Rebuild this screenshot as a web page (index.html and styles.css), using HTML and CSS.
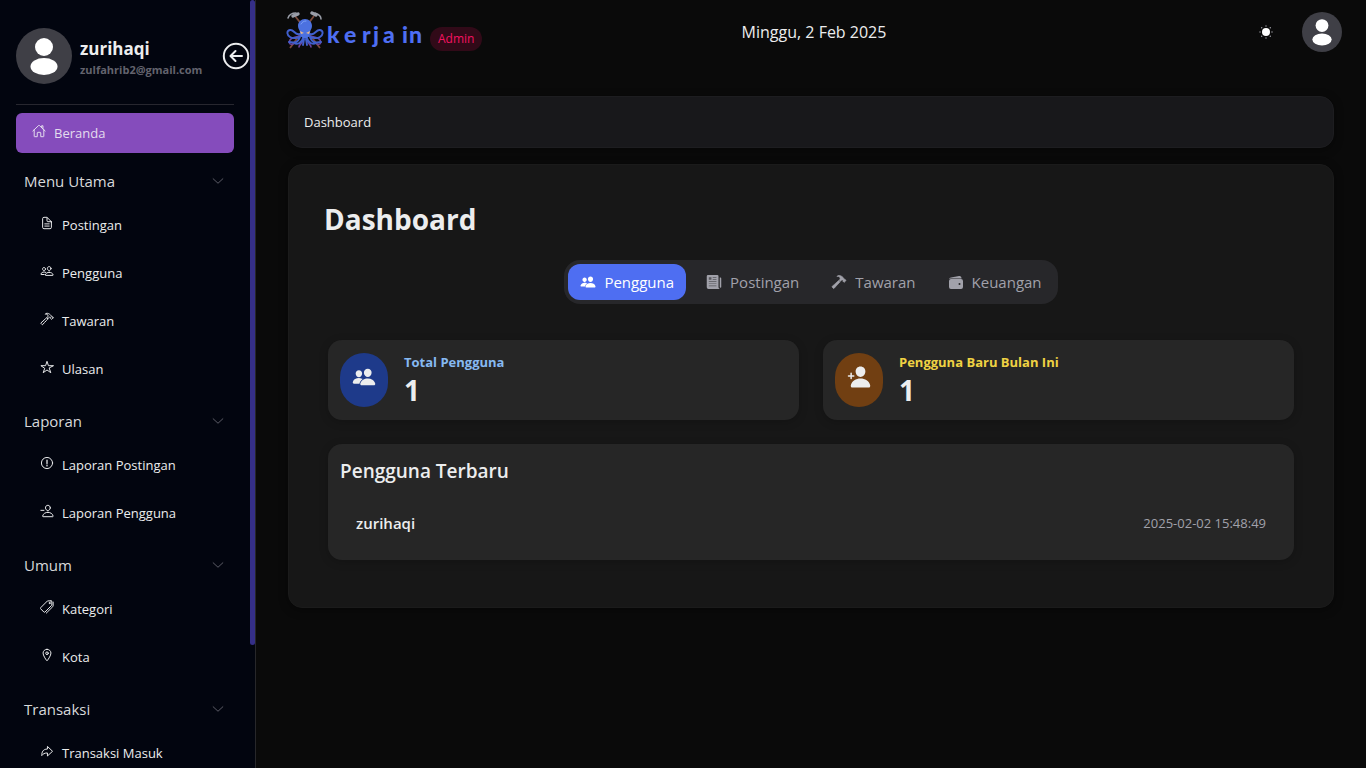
FILE: index.html
```html
<!DOCTYPE html>
<html lang="id">
<head>
<meta charset="utf-8">
<meta name="viewport" content="width=device-width, initial-scale=1">
<title>Dashboard - kerjain</title>
<link rel="stylesheet" href="styles.css">
</head>
<body>
<svg class="sprite" aria-hidden="true">
  <symbol id="avatar" viewBox="0 0 56 56"><circle cx="28" cy="28" r="28" fill="#3f3f46"/><circle cx="28" cy="19" r="9" fill="#fff"/><ellipse cx="28" cy="38.500" rx="13.500" ry="8.500" fill="#fff"/></symbol>
  <symbol id="home" viewBox="0 0 512 512"><path d="M80 212v236a16 16 0 0016 16h96V328a24 24 0 0124-24h80a24 24 0 0124 24v136h96a16 16 0 0016-16V212M480 256L266.890 52c-5-5.280-16.690-5.340-21.780 0L32 256M400 179V64h-48v69"/></symbol>
  <symbol id="document" viewBox="0 0 512 512"><path d="M416 221.250V416a48 48 0 01-48 48H144a48 48 0 01-48-48V96a48 48 0 0148-48h98.750a32 32 0 0122.620 9.370l141.260 141.260a32 32 0 019.370 22.620zM256 56v120a32 32 0 0032 32h120M176 288h160M176 368h160"/></symbol>
  <symbol id="people" viewBox="0 0 512 512"><path d="M402 168c-2.930 40.670-33.100 72-66 72s-63.120-31.320-66-72c-3-42.310 26.370-72 66-72s69 30.460 66 72zM336 304c-65.170 0-127.840 32.370-143.540 95.410-2.080 8.340 3.150 16.590 11.720 16.590h263.650c8.570 0 13.770-8.250 11.720-16.590C463.850 335.360 401.180 304 336 304zM200 185.940c-2.340 32.480-26.720 58.060-53 58.060s-50.700-25.570-53-58.060C91.610 152.150 115.340 128 147 128s55.390 24.770 53 57.940zM206 306c-18.050-8.270-37.930-11.450-59-11.450-52 0-102.100 25.850-114.650 76.200-1.650 6.660 2.530 13.250 9.370 13.250H154"/></symbol>
  <symbol id="people-fill" viewBox="0 0 512 512"><path d="M336 256c-20.560 0-40.440-9.180-56-25.840-15.130-16.250-24.370-37.920-26-61-1.740-24.620 5.770-47.260 21.140-63.760S312 80 336 80c23.830 0 45.380 9.060 60.700 25.520 15.470 16.620 23 39.220 21.260 63.630-1.670 23.110-10.900 44.770-26 61C376.440 246.820 356.570 256 336 256zM467.830 432H204.180a27.710 27.710 0 01-22-10.670 30.220 30.220 0 01-5.260-25.790c8.420-33.810 29.280-61.850 60.320-81.080C264.790 297.400 299.860 288 336 288c36.850 0 71 9 98.710 26.050 31.110 19.130 52 47.330 60.380 81.550a30.270 30.270 0 01-5.320 25.780A27.680 27.680 0 01467.830 432zM147 260c-35.190 0-66.130-32.720-69-72.930-1.420-20.600 5-39.650 18-53.620 12.860-13.830 31-21.450 51-21.450s38 7.660 50.930 21.570c13.100 14.080 19.500 33.090 18 53.520-2.870 40.200-33.800 72.910-68.930 72.910zM212.660 291.450c-17.590-8.600-40.420-12.900-65.650-12.900-29.460 0-58.070 7.680-80.570 21.620-25.510 15.830-42.670 38.880-49.600 66.710a27.390 27.390 0 004.790 23.360A25.320 25.320 0 0041.720 400h111a8 8 0 007.870-6.570c8.480-34.060 28.350-62.840 58.120-85.700a8 8 0 00-.630-13.390z"/></symbol>
  <symbol id="hammer" viewBox="0 0 512 512"><path d="M277.420 247a24.680 24.680 0 00-4.080-5.470L255 223.440a21.630 21.630 0 00-6.560-4.570 20.930 20.930 0 00-23.280 4.270c-6.360 6.260-18 17.680-39 38.430C146 301.300 71.430 367.890 37.710 396.290a16 16 0 00-1.090 23.540l39 39.430a16.130 16.130 0 0023.670-.890c29.240-34.370 96.300-109 136-148.230 20.390-20.060 31.820-31.580 38.290-37.940a21.760 21.760 0 003.840-25.200zM478.430 201l-34.310-34a5.440 5.440 0 00-4-1.590 5.590 5.590 0 00-4 1.590 11.410 11.410 0 01-9.550 3.270c-4.480-.490-9.250-1.880-12.330-4.860-7-6.860 1.090-20.360-5.070-29a242.880 242.880 0 00-23.080-26.720c-7.060-7-34.810-33.470-81.550-52.530a123.790 123.790 0 00-47-9.240c-26.350 0-46.610 11.760-54 18.510-5.880 5.320-12 13.770-12 13.770a91.290 91.290 0 0110.810-3.200 79.530 79.530 0 0123.280-1.490C241.190 76.800 259.940 84.100 270 92c16.210 13 23.180 30.390 24.270 52.830.800 16.690-15.230 37.760-30.440 54.940a7.850 7.850 0 00.400 10.830l21.240 21.230a8 8 0 0011.140.100c13.930-13.510 31.090-28.470 40.820-34.460s17.580-7.680 21.350-8.090a35.710 35.710 0 0121.300 4.620 13.650 13.650 0 013.080 2.380c6.460 6.560 6.070 17.280-.500 23.740l-2 1.890a5.500 5.500 0 000 7.840l34.310 34a5.500 5.500 0 004 1.580 5.650 5.650 0 004-1.580L478.430 209a5.820 5.820 0 000-8z"/></symbol>
  <symbol id="star" viewBox="0 0 512 512"><path d="M480 208H308L256 48l-52 160H32l140 96-54 160 138-100 138 100-54-160z"/></symbol>
  <symbol id="alert" viewBox="0 0 512 512"><circle cx="256" cy="256" r="204"/><path d="M256 150v128M256 334v30" stroke-width="46"/></symbol>
  <symbol id="person-remove" viewBox="0 0 512 512"><path d="M376 144c-3.920 52.870-44 96-88 96s-84.150-43.120-88-96c-4-55 35-96 88-96s92 42 88 96zM288 304c-87 0-175.300 48-191.640 138.600-2 10.920 4.210 21.400 15.650 21.400H464c11.440 0 17.620-10.480 15.650-21.400C463.300 352 375 304 288 304zM144 232H32"/></symbol>
  <symbol id="tags" viewBox="0 0 512 512"><path d="M403.290 32H280.360a14.460 14.460 0 00-10.300 4.250L24.400 281.900a28.850 28.850 0 000 40.700l117 117a28.860 28.860 0 0040.710 0L427.800 194a14.460 14.460 0 004.200-10.300V60.840A28.770 28.770 0 00403.290 32zM230 480L466 244a44 44 0 0014-31V76"/><circle cx="352" cy="112" r="20" fill="currentColor"/></symbol>
  <symbol id="pin" viewBox="0 0 512 512"><path d="M256 48c-79.500 0-144 61.390-144 137 0 87 96 224.870 131.250 272.490a15.770 15.770 0 0025.500 0C304 409.890 400 272.070 400 185c0-75.610-64.500-137-144-137z"/><circle cx="256" cy="192" r="48"/></symbol>
  <symbol id="redo" viewBox="0 0 512 512"><path d="M448 256L272 88v96C103.570 184 64 304.770 64 424c48.610-62.240 91.600-96 208-96v96z"/></symbol>
  <symbol id="chevron" viewBox="0 0 512 512"><path d="M48 160l208 192 208-192"/></symbol>
  <symbol id="back" viewBox="0 0 28 28"><circle cx="14" cy="14" r="12.200"/><path d="M20 14H9M13.500 9L8.500 14l5 5"/></symbol>
  <symbol id="newspaper" viewBox="0 0 512 512"><path d="M452 112h-12v304a24 24 0 0048 0V144a32 32 0 00-36-32z"/><path d="M400 416V72a40 40 0 00-40-40H64a40 40 0 00-40 40v352a56 56 0 0056 56h364a64 64 0 01-44-64z"/><path d="M90 100h84v84H90zM214 100h120v24H214zM214 164h120v24H214zM90 232h244v22H90zM90 300h244v22H90zM90 368h244v22H90z" fill="#27272a" fill-opacity=".6"/></symbol>
  <symbol id="wallet" viewBox="0 0 512 512"><path d="M38 160c12-12 26-19 46-20h350c0-50-32-82-80-74L96 110c-34 7-54 25-58 50z"/><path fill-rule="evenodd" d="M95 160h322a63 63 0 0163 63v194a63 63 0 01-63 63H95a63 63 0 01-63-63V223a63 63 0 0163-63zM368 288a32 32 0 100 64 32 32 0 000-64z"/></symbol>
  <symbol id="person-add" viewBox="0 0 512 512"><path d="M288 256c52.790 0 99.430-49.710 104-110.820 2.270-30.700-7.360-59.330-27.120-80.600C345.330 43.570 318 32 288 32c-30.240 0-57.590 11.500-77 32.380-19.630 21.110-29.200 49.800-27 80.780C188.490 206.280 235.120 256 288 256zM495.380 439.760c-8.440-46.820-34.790-86.150-76.190-113.750C382.420 301.500 335.830 288 288 288s-94.420 13.500-131.190 38c-41.400 27.600-67.750 66.930-76.190 113.750-1.930 10.730.690 21.340 7.190 29.110A30.940 30.940 0 00112 480h352a30.940 30.940 0 0024.210-11.130c6.480-7.770 9.100-18.380 7.170-29.110zM104 288v-40h40a16 16 0 000-32h-40v-40a16 16 0 00-32 0v40H32a16 16 0 000 32h40v40a16 16 0 0032 0z"/></symbol>
  <symbol id="sun" viewBox="0 0 14 14"><circle cx="7" cy="7" r="4" fill="#fff"/><g fill="#a1a1aa"><circle cx="7" cy="1" r=".7"/><circle cx="7" cy="13" r=".7"/><circle cx="1" cy="7" r=".7"/><circle cx="13" cy="7" r=".7"/><circle cx="2.700" cy="2.700" r=".7"/><circle cx="11.300" cy="2.700" r=".7"/><circle cx="2.700" cy="11.300" r=".7"/><circle cx="11.300" cy="11.300" r=".7"/></g></symbol>
</svg>

<div class="app">
  <aside class="sidebar">
    <div class="profile">
      <svg class="avatar-large" aria-hidden="true"><use href="#avatar"/></svg>
      <div class="profile-text">
        <strong class="profile-name">zurihaqi</strong>
        <span class="profile-email">zulfahrib2@gmail.com</span>
      </div>
      <button class="collapse" type="button" aria-label="Tutup menu"><svg class="line"><use href="#back"/></svg></button>
    </div>
    <nav class="nav">
      <a class="home-link" href="#"><svg class="icon line" aria-hidden="true"><use href="#home"/></svg>Beranda</a>
      <section class="group">
        <button class="group-title" type="button">Menu Utama<svg class="chevron line" aria-hidden="true"><use href="#chevron"/></svg></button>
        <a class="item" href="#"><svg class="icon line" aria-hidden="true"><use href="#document"/></svg>Postingan</a>
        <a class="item" href="#"><svg class="icon line" aria-hidden="true"><use href="#people"/></svg>Pengguna</a>
        <a class="item" href="#"><svg class="icon line" aria-hidden="true"><use href="#hammer"/></svg>Tawaran</a>
        <a class="item" href="#"><svg class="icon line" aria-hidden="true"><use href="#star"/></svg>Ulasan</a>
      </section>
      <section class="group">
        <button class="group-title" type="button">Laporan<svg class="chevron line" aria-hidden="true"><use href="#chevron"/></svg></button>
        <a class="item" href="#"><svg class="icon line" aria-hidden="true"><use href="#alert"/></svg>Laporan Postingan</a>
        <a class="item" href="#"><svg class="icon line" aria-hidden="true"><use href="#person-remove"/></svg>Laporan Pengguna</a>
      </section>
      <section class="group">
        <button class="group-title" type="button">Umum<svg class="chevron line" aria-hidden="true"><use href="#chevron"/></svg></button>
        <a class="item" href="#"><svg class="icon line" aria-hidden="true"><use href="#tags"/></svg>Kategori</a>
        <a class="item" href="#"><svg class="icon line" aria-hidden="true"><use href="#pin"/></svg>Kota</a>
      </section>
      <section class="group">
        <button class="group-title" type="button">Transaksi<svg class="chevron line" aria-hidden="true"><use href="#chevron"/></svg></button>
        <a class="item" href="#"><svg class="icon line" aria-hidden="true"><use href="#redo"/></svg>Transaksi Masuk</a>
      </section>
    </nav>
    <div class="scroll-thumb"></div>
  </aside>

  <div class="content">
    <header class="topbar">
      <div class="brand">
        <svg class="logo" viewBox="0 0 138 42" role="img" aria-label="kerja in">
          <g fill="none" stroke="#7b4a3c" stroke-width="1.800"><path d="M9 5l25 32M28 5L4 37"/></g>
          <g fill="none" stroke="#9a9ea8" stroke-linecap="round"><path d="M2 7c1-3 4-5 8-5" stroke-width="1.500"/><path d="M7 5l5-2" stroke-width="3.400"/><path d="M35 8c0-3-3-5-6-6" stroke-width="1.500"/><path d="M30 4l-4-2" stroke-width="3.400"/></g>
          <g fill="none" stroke="#6c439e" stroke-width="1.600" stroke-linecap="round"><path d="M14 25c-5 1-8 1-10 4s0 5 3 4M24 25c5 1 8 1 10 4s0 5-3 4M17 28c0 5-4 5-4 8M21 28c0 5 4 5 4 8"/></g>
          <g fill="none" stroke="#405fcd" stroke-width="1.900" stroke-linecap="round"><path d="M14 23c-5 2-6-5-10-4s-3 5 0 7 8 1 11-1M24 23c5 2 6-5 10-4s3 5 0 7-8 1-11-1M14 26c-2 6-6 6-11 5M24 26c2 6 6 6 11 5M17 27c-1 5-6 7-9 5M21 27c1 5 6 7 9 5M18 28l-1 6M20 28l1 6"/></g>
          <path d="M19 8c-4 0-7 3-7 7 0 3 2 4 2 7 0 7 10 7 10 0 0-3 2-4 2-7 0-4-3-7-7-7z" fill="#4c71e0"/>
          <path d="M15 13c1-2 3-3 5-3" fill="none" stroke="#7ba0f5" stroke-linecap="round"/>
          <path d="M14 20l4 2-3 1zM24 20l-4 2 3 1z" fill="#e9b98b"/>
          <text class="logo-text" y="32" x="41 58 76 87 97 116 123">kerjain</text>
        </svg>
        <span class="badge">Admin</span>
      </div>
      <time class="date" datetime="2025-02-02">Minggu, 2 Feb 2025</time>
      <div class="actions">
        <button class="theme" type="button" aria-label="Ganti tema"><svg><use href="#sun"/></svg></button>
        <button class="account" type="button" aria-label="Akun"><svg><use href="#avatar"/></svg></button>
      </div>
    </header>

    <main class="main">
      <nav class="breadcrumb" aria-label="Breadcrumb"><a href="#">Dashboard</a></nav>
      <section class="panel">
        <h1 class="title">Dashboard</h1>
        <div class="tabs" role="tablist">
          <button class="tab active" type="button" role="tab" aria-selected="true"><svg class="tab-icon" aria-hidden="true"><use href="#people-fill"/></svg>Pengguna</button>
          <button class="tab" type="button" role="tab" aria-selected="false"><svg class="tab-icon" aria-hidden="true"><use href="#newspaper"/></svg>Postingan</button>
          <button class="tab" type="button" role="tab" aria-selected="false"><svg class="tab-icon bold" aria-hidden="true"><use href="#hammer"/></svg>Tawaran</button>
          <button class="tab" type="button" role="tab" aria-selected="false"><svg class="tab-icon" aria-hidden="true"><use href="#wallet"/></svg>Keuangan</button>
        </div>
        <div class="body">
          <div class="stats">
            <article class="card stat blue">
              <span class="stat-icon"><svg aria-hidden="true"><use href="#people-fill"/></svg></span>
              <div><h2 class="stat-label">Total Pengguna</h2><p class="stat-value">1</p></div>
            </article>
            <article class="card stat amber">
              <span class="stat-icon"><svg aria-hidden="true"><use href="#person-add"/></svg></span>
              <div><h2 class="stat-label">Pengguna Baru Bulan Ini</h2><p class="stat-value">1</p></div>
            </article>
          </div>
          <section class="card latest">
            <h2 class="latest-title">Pengguna Terbaru</h2>
            <ul class="users">
              <li class="user"><span class="user-name">zurihaqi</span><time class="user-time">2025-02-02 15:48:49</time></li>
            </ul>
          </section>
        </div>
      </section>
    </main>
  </div>
</div>
</body>
</html>
```
FILE: styles.css
```css
* { box-sizing: border-box; }

body {
  margin: 0;
  background: #0a0a0a;
  color: #ecedee;
  font-family: "Segoe UI", "Open Sans", "Noto Sans", sans-serif;
  font-size: 15px;
  line-height: 24px;
}

h1, h2, p, ul { margin: 0; padding: 0; }
ul { list-style: none; }
a { color: inherit; text-decoration: none; }
button {
  padding: 0;
  border: 0;
  background: none;
  color: inherit;
  font: inherit;
  cursor: pointer;
}
svg { display: block; flex: none; fill: currentColor; }

.sprite { position: absolute; width: 0; height: 0; }
.line {
  fill: none;
  stroke: currentColor;
  stroke-width: 36;
  stroke-linecap: round;
  stroke-linejoin: round;
}

.app { display: flex; height: 100vh; overflow: hidden; }

/* Sidebar */
.sidebar {
  position: relative;
  flex: none;
  width: 256px;
  padding: 16px 21px 0 16px;
  overflow: hidden;
  background: #02050f;
  border-right: 1px solid #27272a;
}
.scroll-thumb {
  position: absolute;
  top: 0;
  right: 0;
  width: 5px;
  height: 84%;
  border-radius: 3px;
  background: #352f88;
}
.profile {
  display: flex;
  align-items: center;
  gap: 8px;
  height: 88px;
  margin-right: -16px;
  padding-bottom: 8px;
}
.avatar-large { width: 56px; height: 56px; }
.profile-text { flex: 1; min-width: 0; padding-top: 4px; }
.profile-name { display: block; font-size: 17px; line-height: 24px; }
.profile-email {
  display: block;
  color: #63636d;
  font-size: 11px;
  font-weight: 700;
  line-height: 18px;
}
.collapse svg { width: 28px; height: 28px; stroke-width: 2; }
.nav { border-top: 1px solid #27272f; padding-top: 8px; }
.home-link {
  display: flex;
  align-items: center;
  gap: 8px;
  height: 40px;
  padding: 0 16px;
  border-radius: 6px;
  background: #854cbc;
  color: #e4dcee;
  font-size: 13px;
}
.icon { width: 14px; height: 14px; margin-bottom: 4px; }
.group { margin-top: 8px; }
.group-title {
  display: flex;
  align-items: center;
  justify-content: space-between;
  width: 100%;
  height: 40px;
  padding: 0 10px 0 8px;
  color: #d8d9db;
}
.chevron { width: 12px; height: 12px; color: #62626c; stroke-width: 40; }
.item {
  display: flex;
  align-items: center;
  gap: 8px;
  height: 48px;
  padding-left: 24px;
  font-size: 13px;
}

/* Top bar */
.content { flex: 1; min-width: 0; }
.topbar {
  display: grid;
  grid-template-columns: 1fr auto 1fr;
  align-items: center;
  height: 64px;
  padding: 0 24px 0 30px;
}
.brand { display: flex; align-items: center; gap: 6px; }
.logo { width: 138px; height: 42px; }
.logo-text {
  fill: #4e6ef2;
  font-family: Lato, sans-serif;
  font-size: 23px;
  font-weight: 900;
}
.badge {
  margin-top: 13px;
  padding: 0 8px;
  border-radius: 12px;
  background: #310a18;
  color: #f31260;
  font-size: 12px;
}
.date { font-size: 16px; }
.actions { display: flex; justify-content: flex-end; align-items: center; gap: 29px; }
.theme svg { width: 14px; height: 14px; }
.account svg { width: 40px; height: 40px; }

/* Page */
.main { display: grid; gap: 16px; padding: 32px; }
.breadcrumb {
  padding: 13px 15px;
  border: 1px solid #1d1d20;
  border-radius: 14px;
  background: #18181b;
  font-size: 13px;
  box-shadow: 0 2px 10px #0006;
}
.panel {
  padding: 36px 35px 47px;
  border: 1px solid #1b1b1b;
  border-radius: 14px;
  background: #171717;
  box-shadow: 0 2px 10px #0006;
}
.title { font-size: 28px; font-weight: 700; line-height: 36px; }
.tabs {
  display: flex;
  gap: 8px;
  width: max-content;
  margin: 23px auto 36px;
  padding: 4px;
  border-radius: 16px;
  background: #27272a;
}
.tab {
  display: flex;
  align-items: center;
  gap: 8px;
  height: 36px;
  padding: 0 12px;
  border-radius: 12px;
  color: #a1a1aa;
}
.tab.active { background: #4e6ef2; color: #fff; }
.tab-icon { width: 16px; height: 16px; }
.bold { stroke: currentColor; stroke-width: 24; }
.body { display: grid; gap: 24px; padding: 0 4px; }
.stats { display: grid; grid-template-columns: 1fr 1fr; gap: 24px; }
.card {
  padding: 12px;
  border-radius: 14px;
  background: #262626;
  box-shadow: 0 2px 10px #0003;
}
.stat { display: flex; align-items: center; gap: 16px; min-height: 80px; }
.stat-icon {
  display: grid;
  place-items: center;
  width: 48px;
  height: 54px;
  padding-bottom: 6px;
  border-radius: 24px;
}
.stat-icon svg { width: 24px; height: 24px; }
.blue .stat-icon { background: #1e3a8a; }
.blue .stat-label { color: #86b9f2; }
.amber .stat-icon { background: #713f12; }
.amber .stat-label { color: #efd243; }
.stat-label { font-size: 13px; font-weight: 700; line-height: 20px; }
.stat-value { font-size: 28px; font-weight: 700; line-height: 36px; }
.latest-title { font-size: 19px; font-weight: 600; line-height: 30px; }
.users { padding: 12px 16px 0; }
.user { display: flex; align-items: center; justify-content: space-between; height: 50px; }
.user-name { font-weight: 600; }
.user-time { color: #a1a1aa; font-size: 13px; }
```
